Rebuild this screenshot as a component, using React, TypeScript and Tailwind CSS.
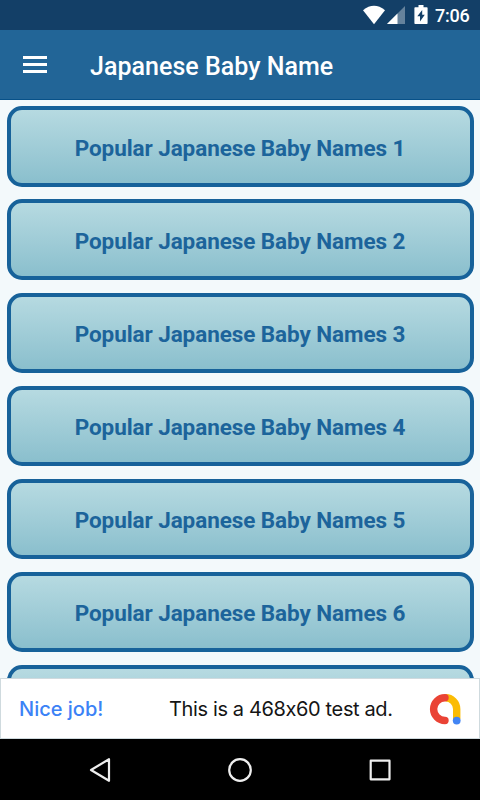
import React from "react";

interface INameCardProps {
  title?: string;
}

const names = [1, 2, 3, 4, 5, 6].map((n) => `Popular Japanese Baby Names ${n}`);

const NameCard: React.FC<INameCardProps> = ({ title }) => {
  return (
    <div className="flex h-[80.4px] shrink-0 items-center justify-center rounded-[15px] border-4 border-[#17629a] bg-linear-to-b from-[#b6dae1] to-[#8abfcd] pt-[2px]">
      <span className="whitespace-nowrap text-[22.5px] leading-[24px] font-bold tracking-[-0.08px] text-[#1c649b]">
        {title}
      </span>
    </div>
  );
};

const StatusBar = () => (
  <div className="flex h-[30px] shrink-0 items-center bg-[#133f67] pl-[363px]">
    <svg width="66" height="30" viewBox="363 0 66 30" fill="#fff">
      <path d="M374 24.3 363 10.2Q374 1.400 385 10.200Z" />
      <path d="M405 6V24H387Z" opacity=".35" />
      <path d="M397.500 13.500V24H387Z" />
      <path d="M418.500 5h5v2.200h3.300q.8 0 .8.800v15.200q0 .8-.8.800h-11.600q-.8 0-.8-.8v-15.200q0-.8.8-.8h3.300Z" />
      <path d="M422.200 10v4.700h2.600L420 21.500v-5.200h-2.700Z" fill="#133f67" />
    </svg>
    <span className="ml-[6px] pt-[2px] text-[18px] leading-none font-medium tracking-[-0.2px] text-white">
      7:06
    </span>
  </div>
);

const AppBar = () => (
  <header className="flex h-[70px] shrink-0 items-center border-b border-[#075189] bg-[#226597] pl-[23px]">
    <div className="flex w-[24px] flex-col gap-[4.5px]">
      <span className="h-[2.6px] bg-white" />
      <span className="h-[2.6px] bg-white" />
      <span className="h-[2.6px] bg-white" />
    </div>
    <h1 className="ml-[43px] pt-[4px] text-[25px] leading-none font-medium tracking-[0.03px] whitespace-nowrap text-white">
      Japanese Baby Name
    </h1>
  </header>
);

const AdBanner = () => (
  <div className="flex h-[61px] shrink-0 items-center border border-[#cfdade] bg-white pl-[18px] font-[Inter,sans-serif] text-[20px] leading-none whitespace-nowrap [font-feature-settings:'calt'_0]">
    <span className="w-[150px] font-medium text-[#3b82f6]">Nice job!</span>
    <span className="w-[260px] tracking-[-0.37px] text-[#151515]">This is a 468x60 test ad.</span>
    <svg width="34" height="34" viewBox="429 691 34 34" fill="none" strokeWidth="7.400" strokeLinecap="round">
      <path d="M445.500 696.800a11.200 11.200 0 0 1 11.200 11.200v10" stroke="#fbbc04" strokeLinecap="butt" />
      <path d="M445 696.700a11.400 11.400 0 0 0 0 22.800" stroke="#ea4335" />
      <circle cx="456.700" cy="719.600" r="3.900" fill="#4285f4" />
    </svg>
  </div>
);

const NavBar = () => (
  <div className="h-[61px] shrink-0 bg-black">
    <svg width="480" height="61" viewBox="0 739 480 61" fill="none" stroke="#eee" strokeWidth="2.200" strokeLinejoin="round">
      <path d="M109 759.200V780.800L91 770Z" />
      <circle cx="240" cy="770" r="10.800" />
      <rect x="370.700" y="760.700" width="18.800" height="18.600" />
    </svg>
  </div>
);

const App = () => {
  return (
    <div className="flex h-[800px] w-[480px] flex-col overflow-hidden bg-[#f3f9fb] font-[Roboto,sans-serif]">
      <StatusBar />
      <AppBar />
      <main className="flex min-h-0 flex-1 flex-col gap-[12.7px] overflow-hidden px-[6.5px] pt-[6.4px]">
        {names.map((name) => (
          <NameCard key={name} title={name} />
        ))}
        {/* peeks out above the banner */}
        <NameCard />
      </main>
      <AdBanner />
      <NavBar />
    </div>
  );
};

export default App;
